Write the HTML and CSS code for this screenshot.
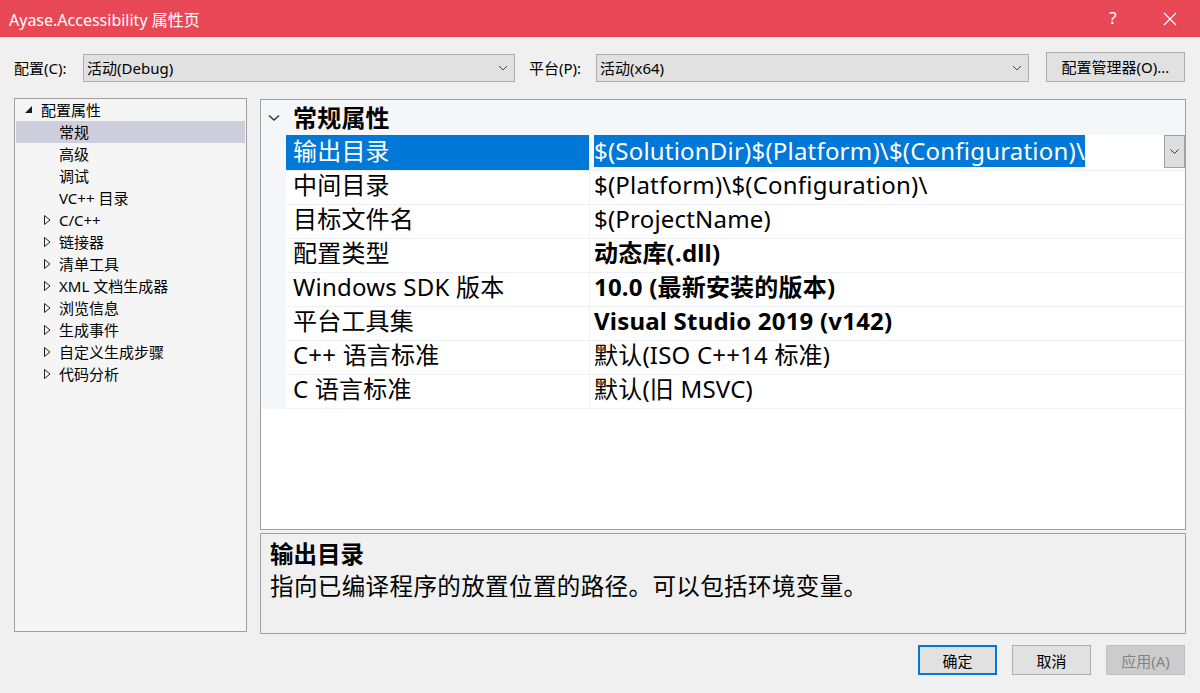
FILE: index.html
```html
<!DOCTYPE html>
<html lang="zh-CN">
<head>
<meta charset="utf-8">
<title>Ayase.Accessibility 属性页</title>
<link rel="stylesheet" href="styles.css">
</head>
<body>
<div class="window">
  <header class="titlebar">
    <span class="title">Ayase.Accessibility 属性页</span>
    <div class="tb-buttons">
      <span class="tb-help">?</span>
      <svg class="tb-close" width="14" height="14" viewBox="0 0 14 14"><path d="M1 1L13 13M13 1L1 13" stroke="#fff" stroke-width="1.2" fill="none"/></svg>
    </div>
  </header>

  <div class="toolbar">
    <span class="label label-config">配置(C):</span>
    <div class="combo combo-config"><span>活动(Debug)</span><svg class="chev" width="10" height="6" viewBox="0 0 10 6"><path d="M1 1L5 5L9 1" stroke="#444" stroke-width="1" fill="none"/></svg></div>
    <span class="label label-platform">平台(P):</span>
    <div class="combo combo-platform"><span>活动(x64)</span><svg class="chev" width="10" height="6" viewBox="0 0 10 6"><path d="M1 1L5 5L9 1" stroke="#444" stroke-width="1" fill="none"/></svg></div>
    <button class="btn btn-manager">配置管理器(O)...</button>
  </div>

  <div class="main">
    <div class="tree">
      <div class="tree-row lvl0"><svg class="exp" width="7" height="7" viewBox="0 0 7 7"><path d="M7 0L7 7L0 7Z" fill="#1e1e1e"/></svg><span>配置属性</span></div>
      <div class="tree-row lvl1 selected"><span>常规</span></div>
      <div class="tree-row lvl1"><span>高级</span></div>
      <div class="tree-row lvl1"><span>调试</span></div>
      <div class="tree-row lvl1"><span>VC++ 目录</span></div>
      <div class="tree-row lvl1 has-children"><svg class="exp" width="7" height="10" viewBox="0 0 7 10"><path d="M0.5 0.5L6 5L0.5 9.5Z" fill="none" stroke="#1e1e1e" stroke-width="1"/></svg><span>C/C++</span></div>
      <div class="tree-row lvl1 has-children"><svg class="exp" width="7" height="10" viewBox="0 0 7 10"><path d="M0.5 0.5L6 5L0.5 9.5Z" fill="none" stroke="#1e1e1e" stroke-width="1"/></svg><span>链接器</span></div>
      <div class="tree-row lvl1 has-children"><svg class="exp" width="7" height="10" viewBox="0 0 7 10"><path d="M0.5 0.5L6 5L0.5 9.5Z" fill="none" stroke="#1e1e1e" stroke-width="1"/></svg><span>清单工具</span></div>
      <div class="tree-row lvl1 has-children"><svg class="exp" width="7" height="10" viewBox="0 0 7 10"><path d="M0.5 0.5L6 5L0.5 9.5Z" fill="none" stroke="#1e1e1e" stroke-width="1"/></svg><span>XML 文档生成器</span></div>
      <div class="tree-row lvl1 has-children"><svg class="exp" width="7" height="10" viewBox="0 0 7 10"><path d="M0.5 0.5L6 5L0.5 9.5Z" fill="none" stroke="#1e1e1e" stroke-width="1"/></svg><span>浏览信息</span></div>
      <div class="tree-row lvl1 has-children"><svg class="exp" width="7" height="10" viewBox="0 0 7 10"><path d="M0.5 0.5L6 5L0.5 9.5Z" fill="none" stroke="#1e1e1e" stroke-width="1"/></svg><span>生成事件</span></div>
      <div class="tree-row lvl1 has-children"><svg class="exp" width="7" height="10" viewBox="0 0 7 10"><path d="M0.5 0.5L6 5L0.5 9.5Z" fill="none" stroke="#1e1e1e" stroke-width="1"/></svg><span>自定义生成步骤</span></div>
      <div class="tree-row lvl1 has-children"><svg class="exp" width="7" height="10" viewBox="0 0 7 10"><path d="M0.5 0.5L6 5L0.5 9.5Z" fill="none" stroke="#1e1e1e" stroke-width="1"/></svg><span>代码分析</span></div>
    </div>

    <div class="right">
      <div class="grid">
        <div class="category">
          <svg class="cat-chev" width="12" height="8" viewBox="0 0 12 8"><path d="M1 1.5L6 6L11 1.5" stroke="#333" stroke-width="1.4" fill="none"/></svg>
          <span class="cat-name">常规属性</span>
        </div>
        <div class="rows">
          <div class="row selected">
            <div class="gutter"></div>
            <div class="name">输出目录</div>
            <div class="value"><span class="hl">$(SolutionDir)$(Platform)\$(Configuration)\</span>
              <div class="drop"><svg width="9" height="5" viewBox="0 0 9 5"><path d="M0.5 0.5L4.5 4.5L8.5 0.5" stroke="#333" stroke-width="1" fill="none"/></svg></div>
            </div>
          </div>
          <div class="row"><div class="gutter"></div><div class="name">中间目录</div><div class="value">$(Platform)\$(Configuration)\</div></div>
          <div class="row"><div class="gutter"></div><div class="name">目标文件名</div><div class="value">$(ProjectName)</div></div>
          <div class="row"><div class="gutter"></div><div class="name">配置类型</div><div class="value bold">动态库(.dll)</div></div>
          <div class="row"><div class="gutter"></div><div class="name">Windows SDK 版本</div><div class="value bold">10.0 (最新安装的版本)</div></div>
          <div class="row"><div class="gutter"></div><div class="name">平台工具集</div><div class="value bold">Visual Studio 2019 (v142)</div></div>
          <div class="row"><div class="gutter"></div><div class="name">C++ 语言标准</div><div class="value">默认(ISO C++14 标准)</div></div>
          <div class="row"><div class="gutter"></div><div class="name">C 语言标准</div><div class="value">默认(旧 MSVC)</div></div>
        </div>
      </div>
      <div class="desc">
        <div class="desc-title">输出目录</div>
        <div class="desc-text">指向已编译程序的放置位置的路径。可以包括环境变量。</div>
      </div>
    </div>
  </div>

  <div class="footer">
    <button class="btn btn-ok">确定</button>
    <button class="btn btn-cancel">取消</button>
    <button class="btn btn-apply" disabled>应用(A)</button>
  </div>
</div>
</body>
</html>
```

FILE: styles.css
```css
* { box-sizing: border-box; }
html, body { margin: 0; padding: 0; }
body {
  background: #f0f0f0;
  font-family: "Noto Sans", "Noto Sans CJK SC", sans-serif;
  color: #000;
}
.window {
  width: 1200px;
  height: 693px;
  display: flex;
  flex-direction: column;
  background: #f0f0f0;
  overflow: hidden;
}

/* title bar */
.titlebar {
  height: 37px;
  background: #e84856;
  display: flex;
  align-items: center;
  justify-content: space-between;
  padding-left: 9px;
  color: #fff;
  flex: none;
}
.title { font-size: 16px; }
.tb-buttons { display: flex; align-items: center; height: 100%; }
.tb-help { font-size: 17px; width: 16px; text-align: center; margin-right: 42px; margin-top: -2px; }
.tb-close { margin-right: 23px; }

/* toolbar */
.toolbar {
  height: 61px;
  display: flex;
  align-items: center;
  padding-left: 14px;
  flex: none;
  font-size: 15px;
}
.label-config { width: 69px; }
.label-platform { width: 67px; margin-left: 14px; }
.combo {
  height: 28px;
  background: #e1e1e1;
  border: 1px solid #adadad;
  display: flex;
  align-items: center;
  justify-content: space-between;
  padding: 0 6px 0 3px;
}
.combo-config { width: 432px; }
.combo-platform { width: 433px; }
.btn {
  font-family: inherit;
  font-size: 15px;
  background: #e1e1e1;
  border: 1px solid #adadad;
  color: #000;
  padding: 0;
  height: 30px;
}
.btn-manager { width: 139px; margin-left: 17px; margin-top: -2px; }

/* main */
.main {
  display: flex;
  padding-left: 14px;
  height: 536px;
  flex: none;
}
.tree {
  width: 233px;
  height: 534px;
  background: #f5f5f5;
  border: 1px solid #a0a0a0;
  font-size: 15px;
  padding-top: 0;
}
.tree-row {
  height: 22px;
  display: flex;
  align-items: center;
  margin: 0 1px;
  white-space: nowrap;
}
.tree-row span { margin-top: -1px; }
.tree-row.lvl0 { padding-left: 9px; }
.tree-row.lvl0 .exp { margin-right: 9px; margin-top: -2px; }
.tree-row.lvl1 { padding-left: 43px; }
.tree-row.has-children { padding-left: 28px; }
.tree-row.has-children .exp { margin-right: 8px; }
.tree-row.selected { background: #cccedb; }

.right {
  margin-left: 13px;
  width: 926px;
  display: flex;
  flex-direction: column;
  gap: 3px;
  padding-top: 1px;
}
.grid {
  height: 431px;
  background: #fff;
  border: 1px solid #a0a0a0;
  font-size: 24px;
  letter-spacing: 0.2px;
}
.category {
  height: 35px;
  background: #f5f6fa;
  display: flex;
  align-items: center;
}
.cat-chev { margin-left: 7px; margin-right: 13px; }
.cat-name { font-weight: bold; margin-top: -3px; }
.rows { display: flex; flex-direction: column; }
.row {
  height: 34px;
  display: grid;
  grid-template-columns: 25px 304px 1fr;
  line-height: 32px;
}
.gutter { background: #f5f6fa; }
.name {
  padding-left: 7px;
  border-bottom: 1px solid #eff0f5;
  border-right: 1px solid #eff0f5;
  display: flex;
  align-items: center;
  white-space: nowrap;
}
.value {
  padding-left: 4px;
  border-bottom: 1px solid #eff0f5;
  display: flex;
  align-items: center;
  white-space: nowrap;
  position: relative;
}
.name, .value { padding-bottom: 3px; }
.value.bold { font-weight: bold; }
.row.selected .name { background: #0078d7; color: #fff; }
.row.selected .value { padding-bottom: 1px; }
.hl { background: #0078d7; color: #fff; line-height: 32px; margin-top: -2px; padding-bottom: 0; }
.drop {
  position: absolute;
  right: 0;
  top: 0;
  width: 21px;
  height: 33px;
  background: #dddddd;
  border: 1px solid #a0a0a0;
  display: flex;
  align-items: center;
  justify-content: center;
}

.desc {
  height: 101px;
  background: #f0f0f0;
  border: 1px solid #a0a0a0;
  padding: 4px 0 0 9px;
  font-size: 23.5px;
  line-height: 32px;
}
.desc-text { letter-spacing: 0.4px; }
.desc-title { font-weight: bold; }

/* footer */
.footer {
  display: flex;
  justify-content: flex-end;
  gap: 15px;
  padding: 11px 15px 0 0;
}
.footer .btn { width: 79px; height: 30px; }
.btn-ok { border: 2px solid #0078d7; }
.btn-apply { background: #cccccc; border-color: #bfbfbf; color: #838383; }
```
